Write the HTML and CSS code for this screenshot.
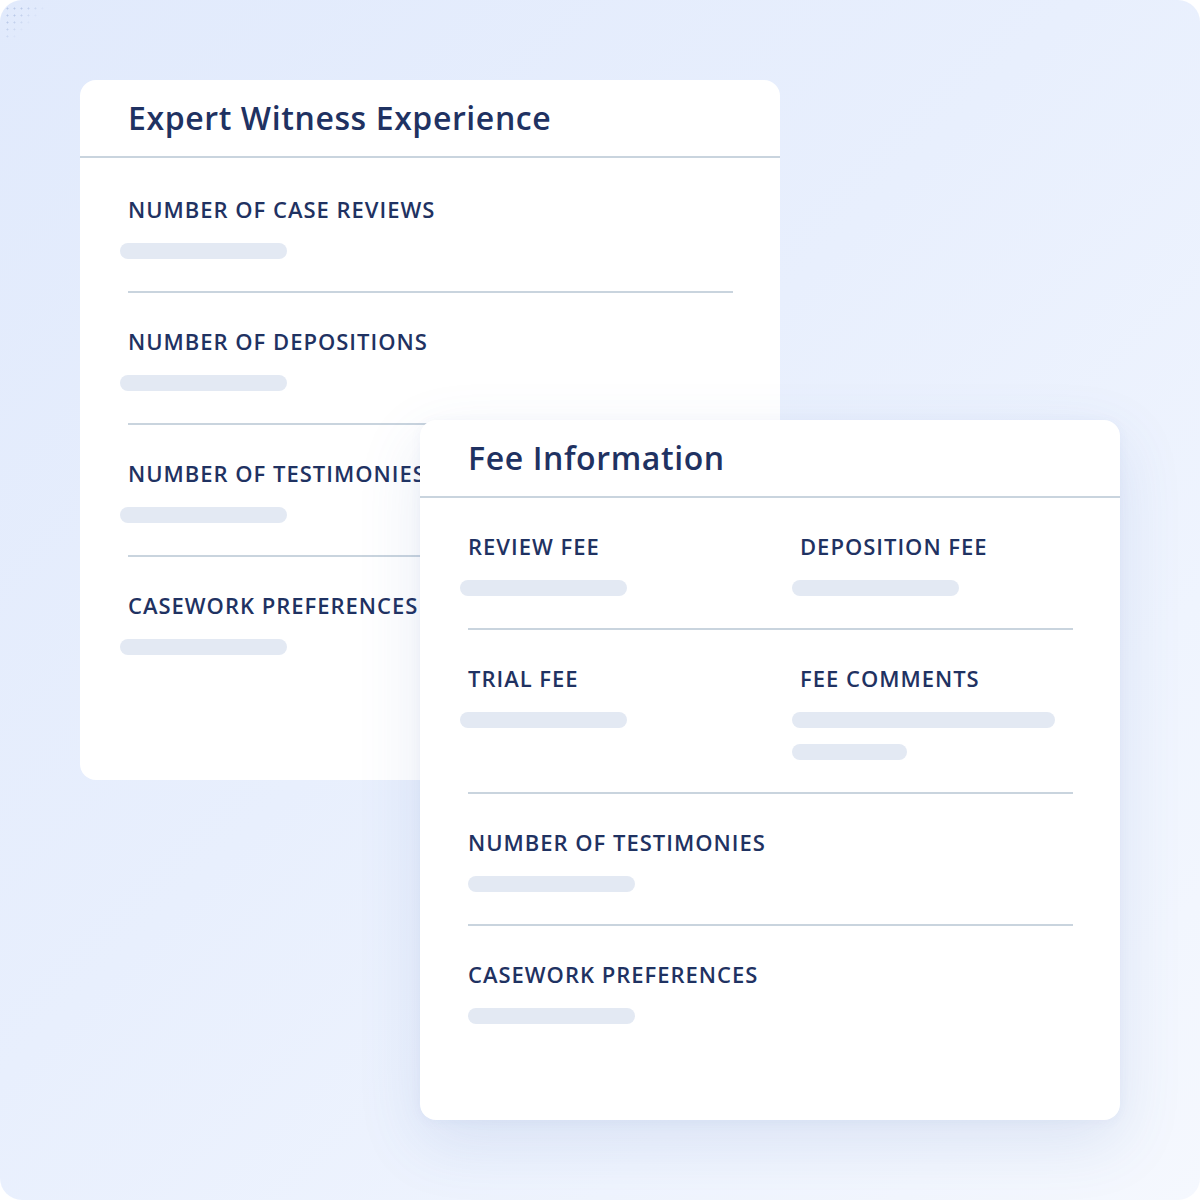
FILE: index.html
```html
<!DOCTYPE html>
<html lang="en">
<head>
<meta charset="utf-8">
<title>Expert Witness Experience</title>
<link rel="stylesheet" href="styles.css">
</head>
<body>
<div class="canvas">
  <div class="dots"></div>
  <section class="card card-exp">
    <header class="card-head"><h2 class="card-title">Expert Witness Experience</h2></header>
    <div class="card-body">
      <div class="row"><div class="label">NUMBER OF CASE REVIEWS</div><div class="bars"><span class="bar bar-md shift"></span></div></div>
      <div class="row"><div class="label">NUMBER OF DEPOSITIONS</div><div class="bars"><span class="bar bar-md shift"></span></div></div>
      <div class="row"><div class="label">NUMBER OF TESTIMONIES</div><div class="bars"><span class="bar bar-md shift"></span></div></div>
      <div class="row last"><div class="label">CASEWORK PREFERENCES</div><div class="bars"><span class="bar bar-md shift"></span></div></div>
    </div>
  </section>
  <section class="card card-fee">
    <header class="card-head"><h2 class="card-title">Fee Information</h2></header>
    <div class="card-body">
      <div class="row cols">
        <div class="col"><div class="label">REVIEW FEE</div><div class="bars"><span class="bar bar-md shift"></span></div></div>
        <div class="col"><div class="label">DEPOSITION FEE</div><div class="bars"><span class="bar bar-md shift"></span></div></div>
      </div>
      <div class="row cols">
        <div class="col"><div class="label">TRIAL FEE</div><div class="bars"><span class="bar bar-md shift"></span></div></div>
        <div class="col"><div class="label">FEE COMMENTS</div><div class="bars"><span class="bar bar-lg shift"></span><span class="bar bar-sm shift"></span></div></div>
      </div>
      <div class="row"><div class="label">NUMBER OF TESTIMONIES</div><div class="bars"><span class="bar bar-md"></span></div></div>
      <div class="row last"><div class="label">CASEWORK PREFERENCES</div><div class="bars"><span class="bar bar-md"></span></div></div>
    </div>
  </section>
</div>
</body>
</html>
```

FILE: styles.css
```css
* { box-sizing: border-box; }
html, body { margin: 0; padding: 0; background: #ffffff; }
body { font-family: "Open Sans", "Noto Sans", sans-serif; color: #1f3262; }

.canvas {
  position: relative;
  width: 1200px;
  height: 1200px;
  border-radius: 22px;
  overflow: hidden;
  background: linear-gradient(135deg, #e1eafc 0%, #e8effd 45%, #eff4fe 75%, #f5f8fe 100%);
  display: grid;
  grid-template-columns: 80px 340px 360px 340px 80px;
  grid-template-rows: 80px 340px 360px 340px 80px;
}

.dots {
  position: absolute;
  left: 4px;
  top: 5px;
  width: 42px;
  height: 36px;
  background-image: radial-gradient(circle, rgba(140,165,210,0.45) 0.8px, transparent 1.2px);
  background-size: 7px 7px;
  -webkit-mask-image: linear-gradient(135deg, #000 30%, transparent 60%);
  mask-image: linear-gradient(135deg, #000 30%, transparent 60%);
}

.card {
  background: #ffffff;
  border-radius: 16px;
  display: flex;
  flex-direction: column;
}
.card-exp { grid-column: 2 / 4; grid-row: 2 / 4; z-index: 1; }
.card-fee {
  grid-column: 3 / 5; grid-row: 3 / 5; z-index: 2;
  box-shadow: 0 22px 64px rgba(70, 105, 180, 0.13), 0 2px 12px rgba(70, 105, 180, 0.05);
}

.card-head {
  height: 78px;
  padding: 0 48px;
  display: flex;
  align-items: center;
  border-bottom: 2px solid #c9d4de;
}
.card-title {
  margin: 0;
  padding-bottom: 1px;
  font-size: 32px;
  line-height: 40px;
  font-weight: 600;
  color: #1f3262;
  letter-spacing: 0.6px;
}

.card-body {
  padding: 0 47px 0 48px;
  display: flex;
  flex-direction: column;
}
.card-exp .card-body { padding-top: 3px; }

.row {
  padding: 36px 0 32px;
  border-bottom: 2px solid #c9d4de;
}
.row.last { border-bottom: 0; }

.cols {
  display: grid;
  grid-template-columns: 332px 1fr;
}

.label {
  font-size: 22px;
  line-height: 24px;
  font-weight: 600;
  letter-spacing: 0.045em;
  white-space: nowrap;
  color: #1f3262;
}

.bars {
  margin-top: 22px;
  display: flex;
  flex-direction: column;
  gap: 16px;
}
.bar {
  display: block;
  height: 16px;
  border-radius: 8px;
  background: #e3e9f3;
}
.bar.shift { margin-left: -8px; }
.bar-md { width: 167px; }
.bar-lg { width: 263px; }
.bar-sm { width: 115px; }
```
